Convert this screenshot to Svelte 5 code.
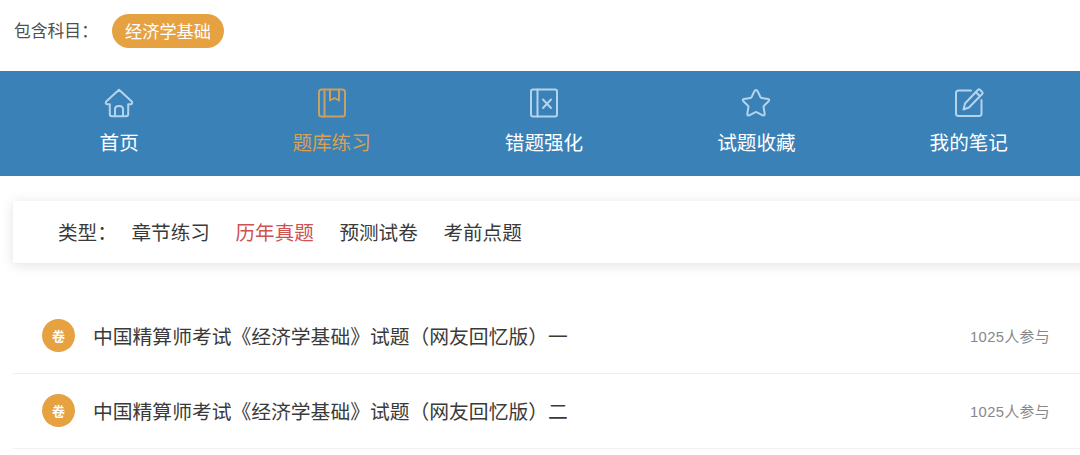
<script>
  const navItems = [
    { key: 'home', label: '首页' },
    { key: 'bank', label: '题库练习', active: true },
    { key: 'wrong', label: '错题强化' },
    { key: 'star', label: '试题收藏' },
    { key: 'note', label: '我的笔记' }
  ];
  const types = ['章节练习', '历年真题', '预测试卷', '考前点题'];
  const papers = [
    '中国精算师考试《经济学基础》试题（网友回忆版）一',
    '中国精算师考试《经济学基础》试题（网友回忆版）二'
  ];
</script>

<div class="page">
  <div class="subject">
    <span class="subject-label">包含科目：</span>
    <span class="pill">经济学基础</span>
  </div>

  <nav class="nav">
    {#each navItems as item}
      <div class="nav-item" class:active={item.active}>
        <svg class="icon" viewBox="0 0 30 30" fill="none" stroke="currentColor" stroke-width="2" stroke-linejoin="round" stroke-linecap="round">
          {#if item.key === 'home'}
            <path d="M15 1.8 L2.2 13.6 Q1 15.6 3 16.2 L5.8 16.2 L5.8 26 Q5.8 28.2 8 28.2 L22 28.2 Q24.2 28.2 24.2 26 L24.2 16.2 L27 16.2 Q29 15.6 27.8 13.6 Z" />
            <path d="M11 28 L11 21 Q11 18 15 18 Q19 18 19 21 L19 28" />
          {:else if item.key === 'bank'}
            <rect x="2" y="1.5" width="26" height="27" rx="2.5" />
            <path d="M7.5 1.5 V28.5" />
            <path d="M13 1.5 V12.5 L17.5 10 L22 12.5 V1.5" />
          {:else if item.key === 'wrong'}
            <rect x="2" y="1.5" width="26" height="27" rx="2" />
            <path d="M8.5 1.5 V28.5" />
            <path d="M14 11.5 L22 20 M22 11.5 L14 20" />
          {:else if item.key === 'star'}
            <path d="M15 2 Q16 2 16.6 3.2 L19.4 9 Q19.8 9.8 20.6 9.9 L27 10.9 Q29 11.4 27.6 13.2 L23 17.8 Q22.4 18.4 22.6 19.2 L23.7 25.8 Q23.8 28 21.8 27.4 L16 24.3 Q15 23.8 14 24.3 L8.2 27.4 Q6.2 28 6.3 25.8 L7.4 19.2 Q7.6 18.4 7 17.8 L2.4 13.2 Q1 11.4 3 10.9 L9.4 9.9 Q10.2 9.8 10.6 9 L13.4 3.2 Q14 2 15 2 Z" />
          {:else}
            <path d="M17 2.5 H4.5 Q2 2.5 2 5 V25.5 Q2 28 4.5 28 H25 Q27.5 28 27.5 25.5 V12" />
            <path d="M24 1.8 Q25 1 26 1.8 L28.2 4 Q29 5 28.2 6 L15 19.5 L9.5 21.5 L11 15.5 Z" />
            <path d="M21.8 4 L26 8.2" />
          {/if}
        </svg>
        <span class="nav-label">{item.label}</span>
      </div>
    {/each}
  </nav>

  <div class="types">
    <span class="types-label">类型：</span>
    {#each types as type, i}
      <span class="type" class:current={i === 1}>{type}</span>
    {/each}
  </div>

  <ul class="papers">
    {#each papers as paper}
      <li class="paper">
        <span class="badge">卷</span>
        <span class="paper-title">{paper}</span>
        <span class="paper-count">1025人参与</span>
      </li>
    {/each}
  </ul>
</div>

<style>
  :global(body) {
    margin: 0;
    background: #fff;
    overflow: hidden;
  }
  .page {
    width: 1080px;
    height: 455px;
    overflow: hidden;
    font-family: "Noto Sans CJK SC", "Liberation Sans", sans-serif;
    color: #333;
  }
  .subject {
    height: 71px;
    box-sizing: border-box;
    padding: 14px 0 0 14px;
    display: flex;
    align-items: flex-start;
  }
  .subject-label {
    width: 98px;
    font-size: 16.8px;
    line-height: 32px;
    color: #4f4f4f;
    white-space: nowrap;
  }
  .pill {
    height: 34px;
    line-height: 33px;
    padding: 0 13px;
    border-radius: 17px;
    background: #e6a141;
    color: #fff;
    font-size: 17.2px;
  }
  .nav {
    height: 105px;
    background: #3a81b7;
    padding: 0 5px 0 13px;
    display: grid;
    grid-template-columns: repeat(5, 1fr);
  }
  .nav-item {
    display: flex;
    flex-direction: column;
    align-items: center;
    padding-top: 17px;
    color: #fff;
  }
  .nav-item .icon {
    color: #b4d4ee;
  }
  .nav-item.active {
    color: #dba04f;
  }
  .nav-item.active .icon {
    color: #c99f62;
  }
  .icon {
    width: 30px;
    height: 30px;
    display: block;
  }
  .nav-label {
    margin-top: 10px;
    font-size: 19.6px;
    line-height: 28px;
    white-space: nowrap;
  }
  .types {
    margin: 25px -40px 0 13px;
    height: 62px;
    padding: 0 0 2px 45px;
    box-sizing: border-box;
    background: #fff;
    box-shadow: 0 2px 12px rgba(0, 0, 0, 0.12);
    display: flex;
    align-items: center;
    font-size: 19.6px;
    color: #3a3a3a;
  }
  .types-label {
    width: 73.5px;
    white-space: nowrap;
  }
  .type {
    margin-right: 25.6px;
    white-space: nowrap;
  }
  .type.current {
    color: #cf5150;
  }
  .papers {
    list-style: none;
    margin: 36px 0 0 13px;
    padding: 0;
  }
  .paper {
    height: 75px;
    box-sizing: border-box;
    padding: 0 30px 1px 29px;
    border-bottom: 1px solid #f0f0f0;
    display: flex;
    align-items: center;
  }
  .badge {
    width: 33px;
    height: 33px;
    border-radius: 50%;
    background: #e6a141;
    color: #fff;
    font-size: 13px;
    font-weight: 700;
    line-height: 33px;
    text-align: center;
    flex: none;
  }
  .paper-title {
    margin-left: 18px;
    font-size: 19.8px;
    color: #3a3a3a;
    white-space: nowrap;
  }
  .paper-count {
    margin-left: auto;
    font-family: "Liberation Sans", "Noto Sans CJK SC", sans-serif;
    font-size: 14.8px;
    letter-spacing: 0.4px;
    color: #888;
    white-space: nowrap;
  }
</style>
